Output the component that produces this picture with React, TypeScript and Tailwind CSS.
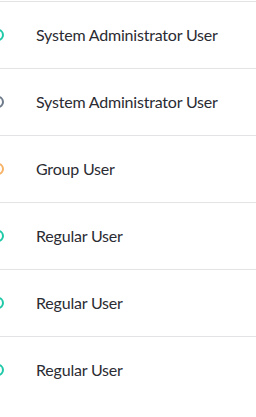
import React from 'react';

const users = [
  { name: 'System Administrator User', ring: 'border-[#1fc9a8]' },
  { name: 'System Administrator User', ring: 'border-[#6c7a89]' },
  { name: 'Group User', ring: 'border-[#f7b267]' },
  { name: 'Regular User', ring: 'border-[#1fc9a8]' },
  { name: 'Regular User', ring: 'border-[#1fc9a8]' },
  { name: 'Regular User', ring: 'border-[#1fc9a8]' },
];

export default function App() {
  return (
    <div className="w-[256px] h-[417px] bg-white overflow-hidden pt-px" style={{ fontFamily: 'Lato, "Noto Sans", sans-serif' }}>
      {users.map((u, i) => (
        <div key={i} className="relative flex items-center h-[67px] border-t border-[#e3e3e6] pl-[36px] pb-[1px]">
          <span className={`absolute -left-[8px] top-[27px] w-[12px] h-[12px] rounded-full border-2 ${u.ring}`} />
          <span className="text-[16px] tracking-[-0.2px] text-[#2b2b33] whitespace-nowrap">{u.name}</span>
        </div>
      ))}
    </div>
  );
}
